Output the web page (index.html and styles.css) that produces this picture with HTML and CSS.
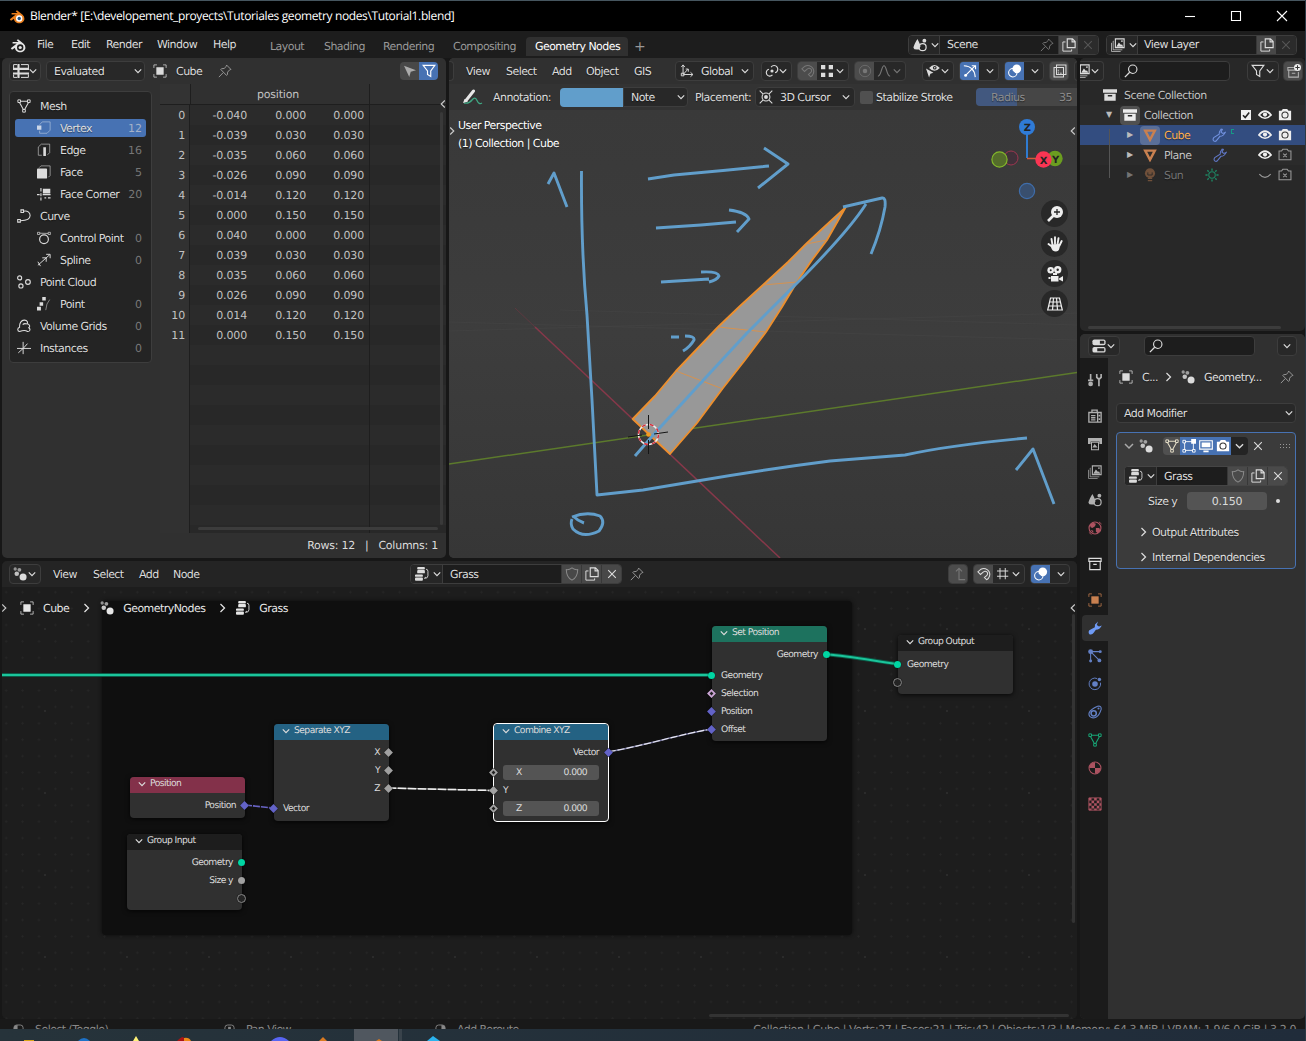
FILE: index.html
```html
<!DOCTYPE html>
<html lang="en">
<head>
<meta charset="utf-8">
<title>Blender</title>
<link rel="stylesheet" href="styles.css">
</head>
<body>
<svg class="defs" width="0" height="0">
<symbol id="chev" viewBox="0 0 8 8"><path d="M.8 2.4 4 5.6 7.2 2.4" fill="none" stroke="currentColor" stroke-width="1.2"/></symbol>
<symbol id="next" viewBox="0 0 8 8"><path d="M2.2.5 5.8 4 2.2 7.5" fill="none" stroke="currentColor" stroke-width="1.1"/></symbol>
<symbol id="prev" viewBox="0 0 8 8"><path d="M5.8.5 2.2 4 5.8 7.5" fill="none" stroke="currentColor" stroke-width="1.1"/></symbol>
<symbol id="close" viewBox="0 0 10 10"><path d="M1.2 1.2 8.8 8.8M8.8 1.2 1.2 8.8" fill="none" stroke="currentColor" stroke-width="1.1"/></symbol>
<symbol id="check" viewBox="0 0 10 10"><path d="M0 0h10v10H0z" fill="#eee"/><path d="M2 5.200 4.200 7.500 8.200 2.500" fill="none" stroke="#222" stroke-width="1.600"/></symbol>
<symbol id="blender" viewBox="0 0 16 16"><path d="M.8 11.2 6.8 6.5H2.6V5h6L6.7 3.3 8 2.2l5.6 4.5a5 5 0 0 1 1.8 4c0 2.600-2.400 4.500-5.200 4.500S5 13.200 5 10.700L2 12.700z" fill="currentColor"/><circle class="hole" cx="10.200" cy="10.500" r="3.200"/><circle cx="10.200" cy="10.500" r="1.600" fill="currentColor"/></symbol>
<symbol id="logo" viewBox="0 0 16 16"><path d="M.8 11.200 6.800 6.500H2.600V5h6L6.700 3.300 8 2.200l5.600 4.500a5 5 0 0 1 1.800 4c0 2.600-2.400 4.500-5.200 4.500S5 13.200 5 10.700L2 12.700z" fill="#ea7e1c"/><circle cx="10.200" cy="10.500" r="3.200" fill="#fff"/><circle cx="10.200" cy="10.500" r="1.700" fill="#265787"/></symbol>
<symbol id="sheet" viewBox="0 0 16 14"><path d="M5.500 0V14M0 4.800H16M0 9.500H16" stroke="currentColor" stroke-width="2.200" fill="none"/><path d="M.6 4V.6H4M8 .6h7.400V4M.6 10.500v2.900H4M8 13.400h7.400v-3" stroke="currentColor" stroke-width="1" fill="none"/></symbol>
<symbol id="object" viewBox="0 0 16 16"><path d="M4.500 1H1V4.500M11.500 1H15V4.500M4.500 15H1V11.500M11.500 15H15V11.500" fill="none" stroke="currentColor" stroke-width="1.100" opacity=".75"/><path d="M3.800 3.800h8.400v8.400H3.800z" fill="currentColor"/></symbol>
<symbol id="pin" viewBox="0 0 16 16"><path d="M9.800 1.200 14.800 6.200 13.300 6.700 11 9.300 10.700 12.200 9.700 13 3.200 6.300 4 5.400 7 5.100 9.400 2.800zM6 9.800 1 15" fill="none" stroke="currentColor" stroke-width="1.100"/></symbol>
<symbol id="cursor" viewBox="0 0 16 16"><path d="M0 1 16 7 9 9 7 16z" fill="currentColor"/></symbol>
<symbol id="filter" viewBox="0 0 16 16"><path d="M1.300 1.500H14.700L10 8V14.300L6.300 12V8z" fill="none" stroke="currentColor" stroke-width="1.300"/></symbol>
<symbol id="mesh" viewBox="0 0 16 16"><path d="M4 2.500H12M3 4.300 7.300 12M13 4.300 8.700 12" fill="none" stroke="currentColor" stroke-width="1.200"/><path d="M1 1h3v3H1zM12 1h3v3h-3zM6.500 12h3v3h-3z" fill="none" stroke="currentColor" stroke-width="1.100"/></symbol>
<symbol id="vert" viewBox="0 0 16 16"><path d="M3 4.200 6 1h9v9.500L11.500 14H3V11" fill="none" stroke="currentColor" opacity=".6"/><path d="M0 5h5v5H0z" fill="currentColor"/></symbol>
<symbol id="edge" viewBox="0 0 16 16"><path d="M5.500 14H1.500V4.500L5 1.300h9.500V11L12 13.500" fill="none" stroke="currentColor" opacity=".65"/><path d="M7.200 4.800h3v10h-3z" fill="currentColor"/></symbol>
<symbol id="face" viewBox="0 0 16 16"><path d="M2.500 3 4.500 1H15V12L13 14" fill="none" stroke="currentColor" opacity=".65"/><rect x="0" y="4" width="11.500" height="11.500" rx="1" fill="currentColor"/></symbol>
<symbol id="corner" viewBox="0 0 16 16"><path d="M4.500 1V5M4.500 12V15.500M0 8.700H3M4.500 7V10.500M6.500 8.700h9M8.500 12.500h2M12.500 12.500h3" stroke="currentColor" stroke-width="1.300"/><path d="M6.700 2h8.500v5.300H6.700z" fill="currentColor"/></symbol>
<symbol id="curve" viewBox="0 0 16 16"><path d="M7.500 2.500C12 1.500 15 4 15 7.500S11 13.300 4 13.500" fill="none" stroke="currentColor" stroke-width="1.200"/><path d="M4.500 1h3v3h-3zM.8 12h3v3h-3z" fill="none" stroke="currentColor" stroke-width="1.200"/></symbol>
<symbol id="cpoint" viewBox="0 0 16 16"><circle cx="8" cy="9.500" r="5" fill="none" stroke="currentColor" stroke-width="1.300"/><path d="M3 2.500 13 2.800" stroke="currentColor" stroke-width=".8"/><path d="M.6 1.500h2.500V4H.6zM12.800 1.500h2.500V4h-2.500z" fill="#242424" stroke="currentColor" stroke-width=".8"/></symbol>
<symbol id="spline" viewBox="0 0 16 16"><path d="M1 14 14.500 2M10.500 1.500H15V6M6 5.500h4.500V10M1 10l3 5" fill="none" stroke="currentColor" stroke-width="1.100"/></symbol>
<symbol id="cloud" viewBox="0 0 16 16"><g fill="none" stroke="currentColor" stroke-width="1.300"><circle cx="3" cy="3.300" r="2.300"/><circle cx="12.500" cy="8" r="2.700"/><circle cx="4.500" cy="12.500" r="2.400"/></g></symbol>
<symbol id="point" viewBox="0 0 16 16"><path d="M6 0h4v4H6zM3 6h4v4H3zM0 11h4.500v4.500H0z" fill="currentColor"/><path d="M14.500 3Q10.500 7 10 15" fill="none" stroke="currentColor" opacity=".6"/></symbol>
<symbol id="volume" viewBox="0 0 16 16"><path d="M3 14.300C.5 14-.2 10.500 3 9.300 2.500 5 5 1 8.500 1.300S12.500 4 11.500 5.500c3.500.5 3.500 3.500 2 4.500 2.500 2 1 4.500-1.500 4.300-2-1.500-5-1.500-9 0zM6.500 6.500q2-2 4.500-.8" fill="none" stroke="currentColor" stroke-width="1.200"/></symbol>
<symbol id="inst" viewBox="0 0 16 16"><path d="M7 1V15M0 8.500H16M1.500 13.500 7 8.500 12 3" fill="none" stroke="currentColor" stroke-width="1.100"/></symbol>
<symbol id="geo" viewBox="0 0 16 16"><g fill="currentColor"><circle cx="2.500" cy="2.300" r="1.900" opacity=".6"/><circle cx="7.300" cy="3.200" r="2.200" opacity=".65"/><circle cx="4.300" cy="7.800" r="2.600" opacity=".85"/><circle cx="11.500" cy="11.500" r="4"/></g></symbol>
<symbol id="tree" viewBox="0 0 16 16"><g fill="currentColor"><rect x="2.500" y="0" width="8.800" height="2.800" rx="1"/><rect x="2.500" y="3.500" width="8.800" height="3.700" rx="1"/><rect x="0" y="8.500" width="9" height="2.700" rx="1"/><rect x="0" y="12" width="9" height="3.700" rx="1"/></g><path d="M12.500 2.500Q14.800 2.500 14.800 5V10Q14.800 13 11 13M12.500 11.500 10.500 13" fill="none" stroke="currentColor"/></symbol>
<symbol id="axes" viewBox="0 0 16 16"><path d="M3.500 12V1.500M1.500 3.500 3.500 1 5.500 3.500M4 12H14.500M12 9.500 14.800 12 12 14.500M4 11.500 9 6M6.500 5.800h3v3M1.500 13.500h3v-3h-3z" fill="none" stroke="currentColor" stroke-width="1.100"/></symbol>
<symbol id="pivot" viewBox="0 0 16 16"><path d="M8.500 12.500A4 4 0 1 1 4.500 6M7 3.500A4.200 4.200 0 1 1 11.500 10" fill="none" stroke="currentColor" stroke-width="1.300"/><circle cx="8" cy="8" r="1.800" fill="currentColor"/></symbol>
<symbol id="magnet" viewBox="0 0 16 16"><path d="M1 5.500 4.500 2.500A6.400 6.400 0 1 1 11 14.500L8.500 12 11 9.800A2.800 2.800 0 1 0 7 6L4 8.500z" fill="none" stroke="currentColor" stroke-width="1.200"/></symbol>
<symbol id="snap" viewBox="0 0 14 14"><path d="M0 0h5v5H0zM9 0h5v5H9zM0 9h5v5H0zM9 9h5v5H9z" fill="currentColor"/></symbol>
<symbol id="prop" viewBox="0 0 16 16"><circle cx="8" cy="8" r="6.500" fill="none" stroke="currentColor" stroke-width=".8"/><circle cx="8" cy="8" r="2.600" fill="currentColor"/></symbol>
<symbol id="fall" viewBox="0 0 16 16"><path d="M1 14C5 14 5 2 8 2s3 12 7 12" fill="none" stroke="currentColor" stroke-width="1.300"/></symbol>
<symbol id="visib" viewBox="0 0 16 16"><path d="M0 5 8.500 10 5 11 3.500 15.500z" fill="currentColor"/><path d="M3.500 4.500Q9.500-2 15.800 4.500 9.500 11 3.500 4.500z" fill="currentColor"/><circle cx="10" cy="4.300" r="2.100" fill="#282828"/><circle cx="10" cy="4.300" r=".9" fill="currentColor"/></symbol>
<symbol id="gizmo" viewBox="0 0 16 16"><path d="M1 2Q13 2.500 14 15M3 13 13.500 2.500M10 2H14.300V6" fill="none" stroke="currentColor" stroke-width="1.300"/><circle cx="3" cy="13" r="1.700" fill="currentColor"/></symbol>
<symbol id="overlay" viewBox="0 0 16 16"><circle cx="5.500" cy="10" r="4.800" fill="none" stroke="currentColor" stroke-width="1.200"/><circle cx="10" cy="5.500" r="5" fill="currentColor"/><path d="M5.300 8A5 5 0 0 0 8 10.500" fill="none" stroke="#4772b3"/></symbol>
<symbol id="xray" viewBox="0 0 16 16"><path d="M4 1.200H14.800V12H4zM1.200 4H12V14.800H1.200z" fill="none" stroke="currentColor" stroke-width="1.200"/><path d="M6 6.500v4h4" fill="none" stroke="currentColor" stroke-dasharray="2 1"/></symbol>
<symbol id="cur3d" viewBox="0 0 16 16"><circle cx="8" cy="8" r="4.500" fill="none" stroke="currentColor" stroke-width="1.200"/><circle cx="8" cy="8" r="2.200" fill="currentColor"/><path d="M.8.8 4.500 4.500M15.200.8 11.500 4.500M.8 15.200 4.500 11.500M15.200 15.200 11.500 11.500" stroke="currentColor" stroke-width="1.200"/></symbol>
<symbol id="scene" viewBox="0 0 16 16"><path d="M5 1Q8.500 7 8.500 10q-1.500 1-1.500 3-6 1-6.500-2Q.8 8 5 1z" fill="currentColor"/><circle cx="13" cy="3" r="2.200" fill="currentColor"/><circle cx="11" cy="10.500" r="4" fill="none" stroke="currentColor" stroke-width="1.400"/></symbol>
<symbol id="layers" viewBox="0 0 16 16"><path d="M3 3.500H2.500V13.500H13M.6 5.500V15.400H11" fill="none" stroke="currentColor" opacity=".8"/><path d="M5 1h10v10H5z" fill="none" stroke="currentColor" stroke-width="1.300"/><path d="M6 10 9 5 11.500 8 12.500 7 14 10z" fill="currentColor"/><circle cx="12.500" cy="3.500" r="1" fill="currentColor"/></symbol>
<symbol id="copy" viewBox="0 0 16 16"><path d="M6 1H12L15 4V11H6zM11.500 1V4.500H15" fill="none" stroke="currentColor" stroke-width="1.300"/><path d="M4 4.500H1V15H11V13" fill="none" stroke="currentColor" stroke-width="1.100"/></symbol>
<symbol id="search" viewBox="0 0 16 16"><circle cx="10" cy="6" r="4.800" fill="none" stroke="currentColor" stroke-width="1.300"/><path d="M6.500 9.500 1 15" stroke="currentColor" stroke-width="1.500"/></symbol>
<symbol id="box" viewBox="0 0 16 16"><path d="M0 1.500h16v4H0zM1.500 6.500h13v8h-13z" fill="currentColor"/><path d="M5.500 8.800h5" stroke="#282828" stroke-width="1.600"/></symbol>
<symbol id="boxo" viewBox="0 0 16 16"><path d="M1 1.500h14v3.500H1zM2 5v9.500h12V5M6 8.500h4" fill="none" stroke="currentColor" stroke-width="1.300"/></symbol>
<symbol id="newcol" viewBox="0 0 16 16"><path d="M8 4H1v3h9M2 7v8h11V9M5.500 10.500h4" fill="none" stroke="currentColor" stroke-width="1.200" opacity=".7"/><circle cx="12" cy="4" r="4" fill="#eee"/><path d="M12 1.500v5M9.500 4h5" stroke="#333" stroke-width="1.200"/></symbol>
<symbol id="tri" viewBox="0 0 16 16"><path d="M2.500 3H13.500L8 13.500z" fill="none" stroke="currentColor" stroke-width="2.800"/></symbol>
<symbol id="wrench" viewBox="0 0 16 16"><path d="M10.500 1.200 8.500 4.500 8.200 7.200 2 11Q.3 13.500 2.300 15q2.200 1 3.500-1.500L9 9.500Q13 9.500 15.200 5L12.500 6.300 10.300 4.800 11.800 1.500z" fill="none" stroke="currentColor" stroke-width="1.200"/></symbol>
<symbol id="wrenchf" viewBox="0 0 16 16"><path d="M11.500 .5 8 4 7.800 7 1.500 10.500Q-.3 13.500 2 15.300q2.800 1 4.500-1.800L9 10Q13.500 9.800 15.800 5L12.500 6.300 10 4.500z" fill="currentColor"/></symbol>
<symbol id="bulb" viewBox="0 0 16 16"><circle cx="8" cy="6" r="5.800" fill="currentColor"/><path d="M5.500 12h5M5.500 14.500h5" stroke="currentColor" stroke-width="1.400"/><path d="M5.500 5v3h5V5" fill="none" stroke="#282828"/></symbol>
<symbol id="sun" viewBox="0 0 16 16"><circle cx="8" cy="8" r="3.700" fill="none" stroke="currentColor" stroke-width="1.200"/><path d="M8 .5V3M8 13v2.500M.5 8H3M13 8h2.500M2.700 2.700 4.300 4.300M11.700 11.700l1.600 1.600M13.300 2.700 11.700 4.300M4.300 11.700 2.700 13.300" stroke="currentColor" stroke-width="1.600"/></symbol>
<symbol id="eye" viewBox="0 0 16 16"><path d="M1 8Q8-.8 15 8 8 15.500 1 8z" fill="none" stroke="currentColor" stroke-width="1.900"/><circle cx="8" cy="7.500" r="2.400" fill="currentColor"/></symbol>
<symbol id="shut" viewBox="0 0 16 16"><path d="M1.500 7Q8 14.500 14.500 7" fill="none" stroke="currentColor" stroke-width="1.300"/></symbol>
<symbol id="cam" viewBox="0 0 16 16"><path d="M1 3H4L5.500 1h5L12 3h3V14H1z" fill="currentColor"/><circle class="lens" cx="8" cy="8" r="3.500" fill="none" stroke-width="1.200"/></symbol>
<symbol id="camo" viewBox="0 0 16 16"><path d="M1.200 3.500H4L5.500 1.500h5L12 3.500h2.800V13.500H1.200zM6 6.500l4 4M10 6.500l-4 4" fill="none" stroke="currentColor" stroke-width="1.200"/></symbol>
<symbol id="props" viewBox="0 0 16 16"><rect x=".5" y=".5" width="15" height="6.500" rx="2.200" fill="currentColor"/><rect x=".5" y="9" width="15" height="6.500" rx="2.200" fill="currentColor"/><path d="M9 2h5v3.500H9zM6 10.500h8V14H6z" fill="#282828"/></symbol>
<symbol id="tools" viewBox="0 0 16 16"><path d="M3 1v8M0 8.500h6M10 1v4l1.500 1.500h2L15 5V1M12.500 6v9" fill="none" stroke="currentColor" stroke-width="1.900"/><circle cx="3" cy="12.500" r="2.700" fill="currentColor"/></symbol>
<symbol id="render" viewBox="0 0 16 16"><path d="M1 4h14v11H1zM4.500 4V1.200h6V4M11 4v11M3.500 7.500h5M3.500 10h5M3.500 12.500h5" fill="none" stroke="currentColor" stroke-width="1.500"/><path d="M12 6.500h2v2h-2zM12 10.500h2v2h-2z" fill="currentColor"/></symbol>
<symbol id="output" viewBox="0 0 16 16"><path d="M0 1h16v7h-3V5H3v3H0z" fill="currentColor"/><path d="M4 6h8v8.500H4z" fill="none" stroke="currentColor" stroke-width="1.200"/><path d="M5 12 7.500 8 11 12z" fill="currentColor"/></symbol>
<symbol id="world" viewBox="0 0 16 16"><circle cx="8" cy="8" r="6.800" fill="none" stroke="currentColor" stroke-width="1.300"/><path d="M2 4 6 2 9 3 8 6 5 8 3 7zM9 8l4 0 1 3-3 3-2-2zM3 10l3 1 0 3z" fill="currentColor"/><path d="M12.500 1 15.500 3.500M1 13l3 2.500" stroke="currentColor"/></symbol>
<symbol id="parts" viewBox="0 0 16 16"><circle cx="3" cy="3" r="2.800" fill="currentColor"/><path d="M3 3H14M3 3V14M3 3 13 13" stroke="currentColor" stroke-width="1.200"/><circle cx="14" cy="3" r="1.700" fill="currentColor"/><circle cx="3" cy="13.800" r="1.700" fill="currentColor"/><circle cx="13" cy="13" r="2.200" fill="currentColor"/></symbol>
<symbol id="phys" viewBox="0 0 16 16"><path d="M10.500 1.800A6.600 6.600 0 1 0 14.300 6.500" fill="none" stroke="currentColor" stroke-width="1.100"/><circle cx="8" cy="8" r="3.200" fill="currentColor"/><circle cx="13" cy="2.800" r="2" fill="currentColor"/></symbol>
<symbol id="constr" viewBox="0 0 16 16"><path d="M1.500 8.500Q3 5 11 1.500 15.500.5 15 5 13 12 9 14 5 16 2 13 .5 11 1.500 8.500z" fill="none" stroke="currentColor" stroke-width="1.300"/><circle cx="6.500" cy="9.500" r="3" fill="none" stroke="currentColor" stroke-width="1.800"/><circle cx="12" cy="4" r="1.200" fill="currentColor"/></symbol>
<symbol id="mat" viewBox="0 0 16 16"><circle cx="8" cy="8" r="6.800" fill="none" stroke="currentColor" stroke-width="1.200"/><path d="M8 8V14.500A6.500 6.500 0 0 0 14.500 8zM8 8V1.500A6.500 6.500 0 0 0 1.500 8z" fill="currentColor"/></symbol>
<symbol id="tex" viewBox="0 0 16 16"><path d="M1 1h14v14H1z" fill="none" stroke="currentColor"/><path d="M1 1h3v3H1zM7 1h3v3H7zM4 4h3v3H4zM10 4h3v3h-3zM1 7h3v3H1zM7 7h3v3H7zM4 10h3v3H4zM10 10h3v3h-3zM13 1h2v3h-2zM13 7h2v3h-2zM1 13h3v2H1zM7 13h3v2H7zM13 13h2v2h-2z" fill="currentColor"/></symbol>
<symbol id="editm" viewBox="0 0 16 16"><path d="M3 3H13V13H3z" fill="none" stroke="currentColor"/><path d="M1 1.500h3v3H1zM1 12h3v3H1zM12 12h3v3h-3z" fill="#4772b3" stroke="currentColor"/><path d="M10.500 0H16v5.500h-5.500z" fill="currentColor"/></symbol>
<symbol id="screen" viewBox="0 0 16 16"><path d="M.8 2h14.400v9.500H.8z" fill="none" stroke="currentColor" stroke-width="1.300"/><path d="M3 4h10v5.500H3zM5 13h6v2H5z" fill="currentColor"/></symbol>
<symbol id="shield" viewBox="0 0 16 16"><path d="M8 1Q11 3.300 14.500 3 14.500 11.500 8 15 1.500 11.500 1.500 3 5 3.300 8 1z" fill="none" stroke="currentColor" stroke-width="1.200"/></symbol>
<symbol id="zoom" viewBox="0 0 16 16"><circle cx="10" cy="6" r="6" fill="currentColor"/><path d="M6.500 9.500 1 15" stroke="currentColor" stroke-width="2.600"/><path d="M10 3v6M7 6h6" stroke="#282828" stroke-width="1.300"/></symbol>
<symbol id="hand" viewBox="0 0 16 16"><path d="M5.500 9 4.500 3M8 8V1.300M10.500 8.500 11.500 2.200M12.500 9.500 14.700 5M5.500 11 1.500 8" stroke="currentColor" stroke-width="1.900" stroke-linecap="round"/><path d="M4.500 8.500 13 8Q13 15.500 9 15.500T4 11z" fill="currentColor"/></symbol>
<symbol id="movie" viewBox="0 0 16 16"><circle cx="3.700" cy="4.200" r="3.300" fill="currentColor"/><circle cx="10.700" cy="3.800" r="3.700" fill="currentColor"/><circle cx="3.700" cy="4.200" r="1" fill="#282828"/><circle cx="10.700" cy="3.800" r="1.200" fill="#282828"/><path d="M4 10H11.500V15.500H4zM12 12.500 16 10v5.500L12 13.500zM1.500 11h2v2h-2zM6 7h4v2H6z" fill="currentColor"/></symbol>
<symbol id="grid" viewBox="0 0 16 16"><path d="M3.500 2H12.500L15.300 14H.7zM2.700 6H13.300M1.700 10H14.300M6.500 2 5.500 14M9.500 2 10.500 14" fill="none" stroke="currentColor" stroke-width="1.200"/></symbol>
<symbol id="snapg" viewBox="0 0 16 16"><path d="M4 0V15M11 0V15M0 4H15M0 11H15" stroke="currentColor" stroke-width="1.300"/></symbol>
<symbol id="up" viewBox="0 0 16 16"><path d="M4.500 5 8 1.500 11.500 5M8 2V14.500H15" fill="none" stroke="currentColor" stroke-width="1.300"/></symbol>
<symbol id="mouse" viewBox="0 0 12 14"><path d="M1 14V4Q1 1 4 1H8Q11 1 11 4V14" fill="none" stroke="currentColor"/></symbol>
</svg>

<header class="titlebar"><svg class="i16"><use href="#logo"/></svg><span class="wintitle">Blender* [E:\developement_proyects\Tutoriales geometry nodes\Tutorial1.blend]</span>
<div class="winbtns"><svg viewBox="0 0 12 12"><path d="M1 6.500h10" /></svg><svg viewBox="0 0 12 12"><path d="M1.500 1.500h9v9h-9z"/></svg><svg viewBox="0 0 12 12"><path d="M1 1 11 11M11 1 1 11"/></svg></div></header>

<nav class="topbar">
 <svg class="i16 applogo"><use href="#blender"/></svg>
 <div class="menus"><span class="w-file">File</span><span class="w-edit">Edit</span><span class="w-render">Render</span><span class="w-window">Window</span><span>Help</span></div>
 <div class="tabs"><span class="w-layout">Layout</span><span class="w-shading">Shading</span><span class="w-rendering">Rendering</span><span class="w-comp">Compositing</span><span class="on">Geometry Nodes</span><span class="plus">+</span></div>
 <div class="idbox scenebox"><span class="seg pick"><svg class="i14"><use href="#scene"/></svg><svg class="c"><use href="#chev"/></svg></span><span class="seg name">Scene<svg class="i14 dim"><use href="#pin"/></svg></span><span class="seg btn"><svg class="i14"><use href="#copy"/></svg></span><span class="seg btn off"><svg class="i9"><use href="#close"/></svg></span></div>
 <div class="idbox layerbox"><span class="seg pick"><svg class="i14"><use href="#layers"/></svg><svg class="c"><use href="#chev"/></svg></span><span class="seg name">View Layer</span><span class="seg btn"><svg class="i14"><use href="#copy"/></svg></span><span class="seg btn off"><svg class="i9"><use href="#close"/></svg></span></div>
</nav>

<main class="workspace">
 <div class="leftcol">
  <div class="toprow">
   <section class="area spreadsheet">
    <div class="bar">
     <span class="drop w32"><svg class="i16"><use href="#sheet"/></svg><svg class="c"><use href="#chev"/></svg></span>
     <span class="drop evald"><b>Evaluated</b><svg class="c"><use href="#chev"/></svg></span>
     <svg class="i14 ml8"><use href="#object"/></svg><b class="cubename">Cube</b><svg class="i14 dim2"><use href="#pin"/></svg>
     <span class="pair"><i><svg class="i12"><use href="#cursor"/></svg></i><i class="blue"><svg class="i14"><use href="#filter"/></svg></i></span>
    </div>
    <div class="sheetbody">
     <div class="domains">
      <div><svg><use href="#mesh"/></svg><b>Mesh</b></div>
      <div class="sub picked"><svg><use href="#vert"/></svg><b>Vertex</b><em>12</em></div>
      <div class="sub"><svg><use href="#edge"/></svg><b>Edge</b><em>16</em></div>
      <div class="sub"><svg><use href="#face"/></svg><b>Face</b><em>5</em></div>
      <div class="sub"><svg><use href="#corner"/></svg><b>Face Corner</b><em>20</em></div>
      <div><svg><use href="#curve"/></svg><b>Curve</b></div>
      <div class="sub"><svg><use href="#cpoint"/></svg><b>Control Point</b><em>0</em></div>
      <div class="sub"><svg><use href="#spline"/></svg><b>Spline</b><em>0</em></div>
      <div><svg><use href="#cloud"/></svg><b>Point Cloud</b></div>
      <div class="sub"><svg><use href="#point"/></svg><b>Point</b><em>0</em></div>
      <div><svg><use href="#volume"/></svg><b>Volume Grids</b><em>0</em></div>
      <div><svg><use href="#inst"/></svg><b>Instances</b><em>0</em></div>
     </div>
     <div class="table">
      <div class="thead"><span></span><span>position</span><span></span></div>
      <div class="trow"><i>0</i><u>-0.040</u><u>0.000</u><u>0.000</u></div>
      <div class="trow"><i>1</i><u>-0.039</u><u>0.030</u><u>0.030</u></div>
      <div class="trow"><i>2</i><u>-0.035</u><u>0.060</u><u>0.060</u></div>
      <div class="trow"><i>3</i><u>-0.026</u><u>0.090</u><u>0.090</u></div>
      <div class="trow"><i>4</i><u>-0.014</u><u>0.120</u><u>0.120</u></div>
      <div class="trow"><i>5</i><u>0.000</u><u>0.150</u><u>0.150</u></div>
      <div class="trow"><i>6</i><u>0.040</u><u>0.000</u><u>0.000</u></div>
      <div class="trow"><i>7</i><u>0.039</u><u>0.030</u><u>0.030</u></div>
      <div class="trow"><i>8</i><u>0.035</u><u>0.060</u><u>0.060</u></div>
      <div class="trow"><i>9</i><u>0.026</u><u>0.090</u><u>0.090</u></div>
      <div class="trow"><i>10</i><u>0.014</u><u>0.120</u><u>0.120</u></div>
      <div class="trow"><i>11</i><u>0.000</u><u>0.150</u><u>0.150</u></div>
      <div class="filler"><i></i><u></u></div>
      <div class="hscroll"></div><div class="vscroll"></div>
     </div>
    </div>
    <div class="foot"><span>Rows: 12</span><span>|</span><span>Columns: 1</span></div>
    <svg class="side-tab sheet-tab"><use href="#prev"/></svg>
   </section>

   <section class="area viewport">
    <div class="bar vbar">
     <span class="sliver"></span>
     <b class="v-view">View</b><b class="v-select">Select</b><b class="v-add">Add</b><b class="v-object">Object</b><b class="v-gis">GIS</b>
     <span class="drop global"><svg class="i14"><use href="#axes"/></svg><b>Global</b><svg class="c"><use href="#chev"/></svg></span>
     <span class="drop ml7 w30"><svg class="i14"><use href="#pivot"/></svg><svg class="c"><use href="#chev"/></svg></span>
     <span class="drop split ml5 w51"><i class="grey fade"><svg class="i14"><use href="#magnet"/></svg></i><svg class="i12"><use href="#snap"/></svg><svg class="c"><use href="#chev"/></svg></span>
     <span class="drop split ml5 w51 fade"><i class="grey"><svg class="i14"><use href="#prop"/></svg></i><svg class="i14"><use href="#fall"/></svg><svg class="c"><use href="#chev"/></svg></span>
     <span class="drop ml16 w32"><svg class="i14"><use href="#visib"/></svg><svg class="c"><use href="#chev"/></svg></span>
     <span class="drop split ml5 w39"><i class="blue"><svg class="i14"><use href="#gizmo"/></svg></i><svg class="c"><use href="#chev"/></svg></span>
     <span class="drop split ml5 w39"><i class="blue"><svg class="i14"><use href="#overlay"/></svg></i><svg class="c"><use href="#chev"/></svg></span>
     <span class="drop split ml5 w20"><i class="grey"><svg class="i14"><use href="#xray"/></svg></i></span>
     <span class="sliver end"></span>
    </div>
    <div class="bar vtool">
     <svg class="pen" viewBox="0 0 20 16"><path d="M1 14Q6 15 9 11T14 11.500 19 14" fill="none" stroke="#3fa783" stroke-width="1.300"/><path d="M3 11.500 10.500 2" stroke="#e6e6e6" stroke-width="3" stroke-linecap="round"/><path d="M0 14 1.500 10 5 12.500z" fill="#e6e6e6"/></svg>
     <b class="annlabel">Annotation:</b><span class="swatch"></span><span class="drop note"><b>Note</b><svg class="c"><use href="#chev"/></svg></span>
     <b class="placelabel">Placement:</b>
     <span class="drop cursorsel"><svg class="i14"><use href="#cur3d"/></svg><b>3D Cursor</b><svg class="c"><use href="#chev"/></svg></span>
     <span class="check"></span><b class="stab">Stabilize Stroke</b>
     <span class="radius"><b>Radius</b><b>35</b></span>
    </div>
    <div class="view3d">
     <svg class="scene3d" viewBox="449 110 628 448">
      <g fill="none" stroke="#444" stroke-width=".7"><path d="M449 331 1077 313M449 322 1077 340M560 310 1077 325"/></g>
      <path d="M449 464 1077 372.500" stroke="#5c7a2c" stroke-width="1.500"/>
      <path d="M535 327 780 558" stroke="#87384a" stroke-width="1.500"/><path d="M515 308 535 327" stroke="#5c3940"/>
      <path d="M845.500 207.500 822 229 806 244 788 262 763 285 740 306 718 327 697 349 676 371 655 396 632.700 419 670 454 697 423 723 388 745 360 766 332 782 307 797 282 812 260 827 240z" fill="#989898" stroke="#ec8f2e" stroke-width="1.900" stroke-linejoin="round"/>
      <path d="M676 371 723 389M718 327 766 332M763 285 797 282M806 244 827 240" stroke="#d59250" stroke-width="1" fill="none"/>
      <g fill="none" stroke="#619ecb" stroke-width="2.900" stroke-linecap="butt" stroke-linejoin="round">
       <path d="M581.500 171Q581 250 587 315L592 400 597 495 643 490 697 481Q760 470 830 461L905 455Q950 445 1027 438"/>
       <path d="M548 184 554 173 567 207M1016 470 1033 449 1054 504"/>
       <path d="M573 516Q578 521 584 523M572 517Q587 511 600 516 606 522 599 531 583 539 573 529 570 524 572 519"/>
       <path d="M648 179 674 175Q720 171 769 166M764 148 788 164 758 188M656 228 701 225 736 222M729 210Q746 212 749 219L737 232M661 282 709 279M701 272Q718 271 719 276 717 280 709 282M671 337H679M685 336Q695 336 694 340 690 347 683 351"/>
       <path d="M635 456 655 433 697 387 747 333 806 274Q850 229 866 204M843 207 882 198Q886 197 885 207 881 230 871 254"/>
      </g>
      <circle cx="648.500" cy="434.500" r="10" fill="none" stroke="#eee" stroke-width="1.500"/><circle cx="648.500" cy="434.500" r="10" fill="none" stroke="#d3303e" stroke-width="1.500" stroke-dasharray="4 4"/>
      <path d="M648.500 415v14M648.500 440v14M628 437l14-2M654 434l14-2" stroke="#151515" stroke-width="1"/><circle cx="648.500" cy="434.500" r="2.300" fill="#f39a22"/>
      <path d="M1027 158V127" stroke="#2f7bd1" stroke-width="2"/><path d="M1027 158.500H1043" stroke="#d05b3b" stroke-width="1.500"/>
      <circle cx="1011" cy="158" r="7" fill="#40313a" stroke="#9d3650"/><circle cx="999.500" cy="159.500" r="7.600" fill="#546c2b" stroke="#83b82a" stroke-width="1.200"/>
      <circle cx="1027" cy="127" r="8" fill="#2f7bd6"/><circle cx="1055" cy="158.500" r="7.700" fill="#6b9d20"/><circle cx="1043.500" cy="159.500" r="8.200" fill="#fa3553"/><circle cx="1027" cy="191" r="7.600" fill="#394f6e" stroke="#3f6daa" stroke-width="1.200"/>
      <g class="axis"><text x="1027.500" y="131">Z</text><text x="1043.500" y="163.500">X</text><text x="1055.500" y="162.500">Y</text></g>
     </svg>
     <div class="viewinfo"><b>User Perspective</b><b>(1) Collection | Cube</b></div>
     <div class="navbtns"><span><svg><use href="#zoom"/></svg></span><span><svg><use href="#hand"/></svg></span><span><svg><use href="#movie"/></svg></span><span><svg><use href="#grid"/></svg></span></div>
     <svg class="side-tab vl"><use href="#next"/></svg><svg class="side-tab vr"><use href="#prev"/></svg>
    </div>
   </section>
  </div>

  <section class="area nodeed">
   <div class="bar nbar">
    <span class="drop w32"><svg class="i14"><use href="#geo"/></svg><svg class="c"><use href="#chev"/></svg></span>
    <b class="n-view">View</b><b class="n-select">Select</b><b class="n-add">Add</b><b class="n-node">Node</b>
    <div class="idbox grassbox"><span class="seg pick"><svg class="i14"><use href="#tree"/></svg><svg class="c"><use href="#chev"/></svg></span><span class="seg name"><b>Grass</b></span><span class="seg btn mute"><svg class="i14"><use href="#shield"/></svg></span><span class="seg btn"><svg class="i14"><use href="#copy"/></svg></span><span class="seg btn"><svg class="i9"><use href="#close"/></svg></span></div>
    <svg class="i14 dim2 ml8"><use href="#pin"/></svg>
    <span class="drop split w20 parent"><i class="grey fade"><svg class="i14"><use href="#up"/></svg></i></span>
    <span class="drop split w51 ml5"><i class="grey"><svg class="i14"><use href="#magnet"/></svg></i><svg class="i12"><use href="#snapg"/></svg><svg class="c"><use href="#chev"/></svg></span>
    <span class="drop split w39 ml5"><i class="blue"><svg class="i14"><use href="#overlay"/></svg></i><svg class="c"><use href="#chev"/></svg></span>
   </div>
   <div class="canvas">
    <div class="frame"></div>
    <svg class="links" viewBox="2 587 1075 432">
     <g fill="none"><path d="M0 675H712M827 654.500C850 656 875 661 898 664" stroke="#0b5a47" stroke-width="4"/><path d="M0 675H712M827 654.500C850 656 875 661 898 664" stroke="#1bc59b" stroke-width="2"/>
     <path d="M245 805 273 808" stroke="#6863c4" stroke-width="1.600" stroke-dasharray="7 1"/><path d="M388 788 493 790.500" stroke="#888" stroke-width="1.600"/><path d="M388 788 493 790.500" stroke="#eee" stroke-width="1.500" stroke-dasharray="8 2"/><path d="M609 751.500C640 747 680 734 712 729" stroke="#77779f" stroke-width="1.600"/><path d="M609 751.500C640 747 680 734 712 729" stroke="#e8e8f2" stroke-width="1.100" stroke-dasharray="7 2"/></g>
    </svg>
    <div class="node position"><h4 class="red"><svg><use href="#chev"/></svg>Position</h4><p class="out">Position<s class="dia vec"></s></p></div>
    <div class="node separate"><h4 class="teal"><svg><use href="#chev"/></svg>Separate XYZ</h4><p class="out">X<s class="dia"></s></p><p class="out">Y<s class="dia"></s></p><p class="out">Z<s class="dia"></s></p><p class="in">Vector<s class="dia vec"></s></p></div>
    <div class="node combine"><h4 class="teal"><svg><use href="#chev"/></svg>Combine XYZ</h4><p class="out">Vector<s class="dia vec"></s></p><p class="in field"><label><span>X</span><span>0.000</span></label><s class="dia hollow"></s></p><p class="in">Y<s class="dia"></s></p><p class="in field"><label><span>Z</span><span>0.000</span></label><s class="dia hollow"></s></p></div>
    <div class="node ginput"><h4 class="black"><svg><use href="#chev"/></svg>Group Input</h4><p class="out">Geometry<s class="dot geo"></s></p><p class="out">Size y<s class="dot"></s></p><p class="out"><s class="dot ring"></s></p></div>
    <div class="node setpos"><h4 class="green"><svg><use href="#chev"/></svg>Set Position</h4><p class="out">Geometry<s class="dot geo"></s></p><p class="in">Geometry<s class="dot geo"></s></p><p class="in">Selection<s class="dia pink hollow"></s></p><p class="in">Position<s class="dia vec"></s></p><p class="in">Offset<s class="dia vec"></s></p></div>
    <div class="node goutput"><h4 class="black"><svg><use href="#chev"/></svg>Group Output</h4><p class="in">Geometry<s class="dot geo"></s></p><p class="in"><s class="dot ring"></s></p></div>
    <div class="path"><svg class="i14"><use href="#object"/></svg><b>Cube</b><svg class="c9"><use href="#next"/></svg><svg class="i14"><use href="#geo"/></svg><b>GeometryNodes</b><svg class="c9"><use href="#next"/></svg><svg class="i14"><use href="#tree"/></svg><b>Grass</b></div>
    <svg class="side-tab nl"><use href="#next"/></svg><svg class="side-tab nr"><use href="#prev"/></svg>
    <div class="nhs"></div><div class="nvs"></div>
   </div>
  </section>
 </div>

 <div class="rightcol">
  <section class="area outliner">
   <div class="bar obar"><span class="drop cut"><svg class="i14"><use href="#layers"/></svg><svg class="c"><use href="#chev"/></svg></span><span class="searchbox osearch"><svg class="i14"><use href="#search"/></svg></span><span class="drop w32 ofilter"><svg class="i14"><use href="#filter"/></svg><svg class="c"><use href="#chev"/></svg></span><span class="drop split w20 ml5"><i class="grey"><svg class="i14"><use href="#newcol"/></svg></i></span></div>
   <div class="orow r0"><svg class="i14"><use href="#box"/></svg><b>Scene Collection</b></div>
   <div class="orow r1"><em>▼</em><span class="halo"><svg class="i14"><use href="#box"/></svg></span><b>Collection</b><div class="flags"><svg class="cb"><use href="#check"/></svg><svg><use href="#eye"/></svg><svg><use href="#cam"/></svg></div></div>
   <div class="orow r2 sel"><em>▶</em><span class="halo"><svg class="i14 orange"><use href="#tri"/></svg></span><b>Cube</b><svg class="i14 wr"><use href="#wrench"/></svg><span class="tick"></span><div class="flags"><svg><use href="#eye"/></svg><svg><use href="#cam"/></svg></div></div>
   <div class="orow r2"><em>▶</em><span class="halo no"><svg class="i14 orange"><use href="#tri"/></svg></span><b>Plane</b><svg class="i14 wr wr2"><use href="#wrench"/></svg><div class="flags"><svg><use href="#eye"/></svg><svg class="dim2"><use href="#camo"/></svg></div></div>
   <div class="orow r2 hid"><em>▶</em><span class="halo no"><svg class="i14 brown"><use href="#bulb"/></svg></span><b>Sun</b><svg class="i14 sunny"><use href="#sun"/></svg><div class="flags"><svg><use href="#shut"/></svg><svg><use href="#camo"/></svg></div></div>
   <div class="guide"></div><div class="ohs"></div>
  </section>
  <section class="area props">
   <div class="bar pbar"><span class="drop w32"><svg class="i14"><use href="#props"/></svg><svg class="c"><use href="#chev"/></svg></span><span class="searchbox psearch"><svg class="i14"><use href="#search"/></svg></span><span class="drop w20 pdrop"><svg class="c"><use href="#chev"/></svg></span></div>
   <div class="pbody">
    <div class="ptabs">
     <span class="gap"><svg><use href="#tools"/></svg></span>
     <span><svg><use href="#render"/></svg></span><span><svg><use href="#output"/></svg></span><span><svg><use href="#layers"/></svg></span><span><svg><use href="#scene"/></svg></span><span class="gap rose"><svg><use href="#world"/></svg></span>
     <span class="gap white"><svg><use href="#boxo"/></svg></span>
     <span class="orange"><svg><use href="#object"/></svg></span><span class="on"><svg><use href="#wrenchf"/></svg></span><span class="bl"><svg><use href="#parts"/></svg></span><span class="bl"><svg><use href="#phys"/></svg></span><span class="bl"><svg><use href="#constr"/></svg></span><span class="gr"><svg><use href="#mesh"/></svg></span><span class="gap rose"><svg><use href="#mat"/></svg></span>
     <span class="rose"><svg><use href="#tex"/></svg></span>
    </div>
    <div class="pmain">
     <div class="pcrumb"><svg class="i14"><use href="#object"/></svg><b>C...</b><svg class="c9"><use href="#next"/></svg><svg class="i14"><use href="#geo"/></svg><b class="gm">Geometry...</b><svg class="i14 dim2 pp"><use href="#pin"/></svg></div>
     <div class="addmod"><b>Add Modifier</b><svg class="c"><use href="#chev"/></svg></div>
     <div class="mod">
      <div class="mhead"><svg class="c10"><use href="#chev"/></svg><svg class="i14"><use href="#geo"/></svg><span class="modes"><i><svg class="i14 cream"><use href="#mesh"/></svg></i><i class="blue"><svg class="i14"><use href="#editm"/></svg></i><i class="blue"><svg class="i14"><use href="#screen"/></svg></i><i class="blue bluecam"><svg class="i14"><use href="#cam"/></svg></i><i class="dk"><svg class="c9"><use href="#chev"/></svg></i></span><svg class="i9"><use href="#close"/></svg><span class="grip"></span></div>
      <div class="idbox modbox"><span class="seg pick"><svg class="i14"><use href="#tree"/></svg><svg class="c"><use href="#chev"/></svg></span><span class="seg name"><b>Grass</b></span><span class="seg btn mute"><svg class="i14"><use href="#shield"/></svg></span><span class="seg btn"><svg class="i14"><use href="#copy"/></svg></span><span class="seg btn"><svg class="i9"><use href="#close"/></svg></span></div>
      <div class="size"><b>Size y</b><span>0.150</span><i></i></div>
      <div class="fold"><svg class="c9"><use href="#next"/></svg><b>Output Attributes</b></div>
      <div class="fold"><svg class="c9"><use href="#next"/></svg><b>Internal Dependencies</b></div>
     </div>
    </div>
   </div>
  </section>
 </div>
</main>
<footer class="status"><span class="s1"><svg viewBox="0 0 12 14"><use href="#mouse"/><path d="M1 8V4Q1 1 5 1V8z" fill="currentColor"/></svg>Select (Toggle)</span><span class="s2"><svg viewBox="0 0 12 14"><use href="#mouse"/><path d="M4.500 3h3v6h-3z" fill="currentColor"/></svg>Pan View</span><span class="s3"><svg viewBox="0 0 12 14"><use href="#mouse"/><path d="M7 1Q11 1 11 4V8H7z" fill="currentColor"/></svg>Add Reroute</span><span class="s4">Collection | Cube | Verts:27 | Faces:21 | Tris:42 | Objects:1/3 | Memory: 64.3 MiB | VRAM: 1.9/6.0 GiB | 3.2.0</span></footer>
<div class="taskbar"><svg viewBox="0 0 1306 12"><path d="M354 0h44v12h-44z" fill="#50575f"/><path d="M399 0h3v12h-3z" fill="#39434b"/><path d="M24 11h10v1H24z" fill="#dba516"/><path d="M78 12Q84 6 90 12z" fill="#1d72c8"/><path d="M133 12 136 7 139 12z" fill="#fff176"/><path d="M177 12Q183 6 184 9V12z" fill="#a91515"/><path d="M184 9Q189 8 191 12H184z" fill="#f08a17"/><path d="M271 12Q280 4 289 12z" fill="#5865f2"/><path d="M319 12 323 8 327 12zM376 12 379 10 382 12z" fill="#d97a20"/><path d="M427 12 433 7 440 12z" fill="#2bb3ee"/></svg></div>
</body>
</html>
```
FILE: styles.css
```css
*{box-sizing:border-box}
body{margin:0;width:1306px;height:1041px;overflow:hidden;background:#171717;color:#dcdcdc;font:11px/14px "DejaVu Sans",sans-serif;letter-spacing:-.55px;text-rendering:geometricPrecision;display:flex;flex-direction:column;border-right:1px solid #2b3945}
b{font-weight:400;white-space:nowrap;text-shadow:0 1px 1px rgba(0,0,0,.45);position:relative;top:1px;flex:none}
i,em{font-style:normal}
u,s{text-decoration:none}
svg{flex:none;display:block}
.defs{position:absolute}
.i16{width:16px;height:16px}.i14{width:14px;height:14px}.i12{width:12px;height:12px}.i9{width:10px;height:10px}
.c{width:8px;height:8px}.c9{width:9px;height:10px}.c10{width:10px;height:10px}
.dim{color:#777}.dim2{color:#999}
.hole{fill:#1d1d1d}.lens{stroke:#333}
.ml5{margin-left:5px}.ml7{margin-left:7px}.ml8{margin-left:8px}.ml16{margin-left:16px}
.titlebar{height:31px;background:#000;border-top:1px solid #46565f;display:flex;align-items:center;padding-left:9px;flex:none}
.wintitle{font:12px/16px "Open Sans","Noto Sans",sans-serif;letter-spacing:-.37px;color:#fff;margin-left:5px;white-space:pre}
.winbtns{margin-left:auto;display:flex;gap:34px;padding-right:17px}
.winbtns svg{width:12px;height:12px;fill:none;stroke:#fff;stroke-width:1.1}
.topbar{height:27px;background:#1d1d1d;display:flex;align-items:center;padding-left:10px;flex:none;position:relative}
.applogo{color:#e6e6e6}
.menus{display:flex;margin-left:11px}
.w-file{width:34px}.w-edit{width:35px}.w-render{width:51px}.w-window{width:56px}
.menus span:last-child{width:34px}
.tabs{display:flex;margin-left:23px;color:#989898;align-self:flex-end;height:21px;line-height:20px}
.w-layout{width:54px}.w-shading{width:59px}.w-rendering{width:70px}.w-comp{width:73px}
.tabs .on{background:#303030;color:#fff;width:102px;height:19px;padding-left:9px;border-radius:4px 4px 0 0;white-space:nowrap}
.plus{font-size:14px;padding-left:6px;width:20px}
.idbox{display:flex;height:20px;border:1px solid #3d3d3d;border-radius:4px;overflow:hidden;background:#1d1d1d;flex:none}
.seg{display:flex;align-items:center;white-space:nowrap}
.pick{width:31px;padding-left:4px;gap:4px;border-right:1px solid #3d3d3d;background:#262626;flex:none}
.name{flex:1;padding-left:7px;justify-content:space-between;padding-right:4px}
.btn{width:20px;background:#484848;justify-content:center;border-left:1px solid #383838}
.btn.off{background:#2b2b2b;color:#555;border:0}.btn.mute{color:#888}
.scenebox{width:191px;margin-left:auto}
.layerbox{width:191px;margin:0 8px 0 7px}
.layerbox .name{padding-left:6px}
.workspace{flex:none;height:961px;display:flex;gap:3px;padding-left:2px}
.leftcol{width:1075px;display:flex;flex-direction:column;gap:3px;flex:none}
.toprow{display:flex;gap:3px;height:500px}
.area{position:relative;border-radius:5px;overflow:hidden;background:#303030}
.spreadsheet{width:444px;display:flex;flex-direction:column;flex:none}
.bar{height:26px;display:flex;align-items:center;flex:none;padding-left:7px}
.drop{height:20px;border:1px solid #3d3d3d;border-radius:4px;background:#282828;display:flex;align-items:center;padding:0 4px 0 3px;justify-content:space-between;flex:none;overflow:hidden}
.w20{width:20px}.w30{width:31px}.w32{width:32px}.w39{width:40px}.w51{width:52px}
.w32 .i16{width:16px;height:14px}
.evald{width:99px;margin-left:5px;padding-left:7px;padding-right:2px}
.cubename{margin:0 16px 0 9px}
.split{padding-left:0}
.split>i,.pair i{width:19px;height:20px;display:flex;align-items:center;justify-content:center;flex:none}
.grey{background:#4c4c4c}.blue{background:#4772b3;color:#fff}
.fade{color:#777}
.w20.split{padding-right:0}
.pair{display:flex;margin-left:auto;margin-right:8px;border-radius:4px;overflow:hidden}
.pair i{height:18px;background:#484848;color:#aaa}.pair i.blue{background:#4772b3;color:#fff}
.sheetbody{display:flex;height:449px}
.domains{width:143px;height:272px;margin:7px 0 0 7px;background:#242424;border:1px solid #3d3d3d;border-radius:4px;padding:3px 5px}
.domains div{height:22px;display:flex;align-items:center;padding:0 4px 0 2px;gap:9px}
.domains div svg{width:14px;height:14px}
.domains .sub{padding-left:22px}
.domains em{margin-left:auto;color:#777;letter-spacing:0;position:relative;top:1px}
.domains .picked{background:#4772b3;height:18px;margin:2px 0}
.domains .picked{border-radius:3px}
.domains .picked em{color:#a5b2c9}
.domains .picked svg{color:#cbd6e8}
.table{margin-left:8px;width:286px;background:#282828;position:relative;color:#c2c2c2}
.thead{height:21px;display:flex;background:#303030;border-bottom:1px solid #1e1e1e;line-height:21px;text-align:center;letter-spacing:-.2px}
.thead span:nth-child(1){width:30px;background:#333}
.thead span:nth-child(2){width:180px;border:solid #1e1e1e;border-width:0 1px;padding-right:4px}
.trow{height:20px;display:flex;line-height:22px;letter-spacing:-.15px}
.trow:nth-child(even){background:#2b2b2b}
.trow i{width:30px;background:#313131;text-align:right;padding-right:4px;border-right:1px solid #1e1e1e}
.trow u{width:59px;text-align:right}.trow u:nth-child(2){width:57px}
.trow u:last-child{width:64px;padding-right:5px;border-right:1px solid #1e1e1e}
.filler{height:188px;display:flex;background:repeating-linear-gradient(#2b2b2b 0 20px,#282828 20px 40px)}
.filler i{width:30px;background:#313131;border-right:1px solid #1e1e1e}.filler u{width:180px;border-right:1px solid #1e1e1e}
.hscroll{position:absolute;left:38px;bottom:3px;width:240px;height:3px;background:#3c3c3c;border-radius:2px}
.vscroll{position:absolute;right:3px;top:28px;width:3px;height:413px;background:#393939;border-radius:2px}
.foot{display:flex;justify-content:flex-end;gap:10px;padding:6px 8px 0 0;letter-spacing:-.25px}
.side-tab{position:absolute;width:8px;height:10px;color:#ccc}
.sheet-tab{right:-1px;top:41px}
.viewport{width:628px;background:#393939;display:flex;flex-direction:column;flex:none}
.vbar{padding-left:0;background:#303030}
.sliver{width:5px;height:20px;border:1px solid #3d3d3d;border-left:0;border-radius:0 4px 4px 0;background:#282828;flex:none}
.end{border-radius:4px 0 0 4px;border-left:1px solid #3d3d3d;border-right:0;margin-left:5px}
.v-view{margin-left:12px;width:40px}.v-select{width:46px}.v-add{width:34px}.v-object{width:48px}.v-gis{width:41px}
.global{width:79px;padding-left:4px;gap:7px}.global .c{margin-left:auto}
.vtool{padding-left:14px;background:#333}
.pen{width:20px;height:16px}
.annlabel{margin-left:10px;width:67px}
.swatch{width:63px;height:19px;background:#619ecb;border-radius:4px 0 0 4px;flex:none}
.note{width:65px;border-radius:0 4px 4px 0;padding-left:7px;padding-right:2px}
.placelabel{margin-left:7px;width:60px}
.cursorsel{width:100px;gap:7px}.cursorsel .c{margin-left:auto}
.check{width:13px;height:13px;border-radius:2px;background:#505050;margin:0 3px 0 5px;flex:none}
.stab{width:100px}
.radius{flex:1;height:18px;display:flex;justify-content:space-between;align-items:center;border-radius:4px 0 0 4px;background:linear-gradient(90deg,#42587f 41px,#464646 41px);color:#8c8c8c;padding:0 5px 0 15px}
.view3d{position:relative;height:448px;background:linear-gradient(#393939,#3d3d3d 50%,#363636)}
.scene3d{width:628px;height:448px}
.axis{font:bold 10px "DejaVu Sans",sans-serif;text-anchor:middle;fill:#222;letter-spacing:0}
.viewinfo{position:absolute;left:9px;top:8px;display:flex;flex-direction:column;gap:4px;color:#fff}
.navbtns{position:absolute;left:592px;top:90px;display:flex;flex-direction:column;gap:3px}
.navbtns span{width:27px;height:27px;border-radius:50%;background:#282828;display:flex;align-items:center;justify-content:center;color:#eee}
.navbtns svg{width:16px;height:16px}
.vl{left:-1px;top:16px}.vr{right:0;top:16px}
.nodeed{height:458px;background:#1d1d1d}
.nbar{background:#242424}
.n-view{margin-left:12px;width:40px}.n-select{width:46px}.n-add{width:34px}.n-node{width:237px}
.grassbox{width:212px}
.grassbox .pick{width:32px}
.parent{margin-left:304px}
.canvas{position:relative;height:432px;background:radial-gradient(circle,#2b2b2b .8px,transparent 1.3px) 2px 1px/82px 82px,radial-gradient(circle,#262626 .8px,transparent 1.4px) -4px -3px/16.4px 16.4px #1d1d1d}
.frame{position:absolute;left:100px;top:14px;width:750px;height:334px;background:#0f0f0f;border-radius:4px;box-shadow:0 0 4px #0c0c0c}
.links{position:absolute;left:0;top:0;width:1075px;height:432px}
.node{position:absolute;width:115px;background:#303030;border-radius:4px;box-shadow:0 1px 5px rgba(0,0,0,.8);font-size:9.2px;letter-spacing:-.56px;line-height:20px}
.node h4{margin:0;height:16px;line-height:14px;font-weight:400;display:flex;align-items:center;gap:4px;padding:0 0 2px 8px;border-radius:4px 4px 0 0}
.node h4 svg{width:8px;height:8px}
.node p{margin:0;height:18px;position:relative;padding:0 9px}
.out{text-align:right}
.node s{position:absolute;width:7px;height:7px;background:#a1a1a1;top:6px;left:-4px;box-shadow:0 0 1px #000}
.node .out s{left:auto;right:-3px}
.dia{transform:rotate(45deg) scale(.9)}.dot{border-radius:50%}
.node .vec{background:#6363c7}.node .geo{background:#00d6a3}
.node .ring{background:#242424;border:1px solid #8a8a8a;width:9px;height:9px;top:5px;margin:0 -1px}
.node .hollow{background:#222;border:2px solid #a1a1a1}.node .pink{border-color:#cca6d6}
.red{background:#83314a}.teal{background:#246283}.black{background:#1d1d1d}.green{background:#1d725e}
.field label{display:flex;justify-content:space-between;background:#545454;border-radius:3px;height:15px;line-height:15px;padding:0 12px 0 13px;position:relative;top:2px}
.position{left:128px;top:190px;height:41px}.position p{top:3px}
.separate{left:272px;top:137px;height:97px}.separate p{top:3px}.separate p:last-child{top:5px}
.combine{left:491px;top:136px;height:99px;width:116px;border:1px solid #fff}.combine p{top:3px}.combine p:nth-child(n+3){top:5px}
.combine .out s{right:-4px}
.ginput{left:125px;top:247px;height:76px}.ginput p{top:3px}
.setpos{left:710px;top:39px;height:115px}.setpos p{top:3px}.setpos p:nth-child(n+3){top:6px}
.goutput{left:896px;top:48px;height:59px}.goutput p{top:4px}
.path{position:absolute;left:18px;top:14px;display:flex;align-items:center;color:#e6e6e6}
.path b{margin-left:9px;margin-right:13px}.path .c9{margin-right:9px}
.nl{left:-2px;top:16px}.nr{right:0;top:16px}
.nhs{position:absolute;left:707px;bottom:2px;width:360px;height:3px;background:#333;border-radius:2px}
.nvs{position:absolute;right:2px;top:27px;width:3px;height:309px;background:#333;border-radius:2px}
.rightcol{width:225px;display:flex;flex-direction:column;gap:3px}
.outliner{height:273px;background:#282828}
.pbar{background:#303030}
.obar{padding:0;background:#282828}
.cut{width:24px;border-left:0;border-radius:0 4px 4px 0;padding-left:0}
.cut .i14{margin-left:-4px}
.searchbox{height:20px;border:1px solid #3d3d3d;border-radius:4px;background:#1d1d1d;display:flex;align-items:center;padding-left:4px}
.osearch{width:111px;margin-left:15px}.ofilter{margin-left:17px}
.outliner .ml5{margin-left:4px}
.orow{height:20px;display:flex;align-items:center;color:#c3c3c3;top:1px;position:relative}
.orow b{margin-left:4px;top:0}
.r0{padding-left:23px}.r0 b{margin-left:7px}.r0 svg{color:#ddd}
.orow em{width:11px;font-size:8px;letter-spacing:0;color:#bbb}
.r1{padding-left:26px}.r1 .halo{margin-left:3px}
.r2{padding-left:47px}.r2 .halo{margin-left:2px}
.orow:nth-child(odd){background:#2b2b2b}
.halo{width:20px;height:19px;border-radius:4px;background:#505050;display:flex;align-items:center;justify-content:center;color:#eee}
.halo.no{background:none}
.orow.r2.sel{background:#334d80}.sel .halo{background:#5a6f98}.sel b{color:#ffaf4d}
.orow b{transform:translateY(1px)}
.orange{color:#c88050}.brown{color:#70503a}
.wr{color:#6078c8;margin-left:23px}.wr2{margin-left:22px}
.sel .wr{color:#7292e0;margin-left:22px}
.tick{width:3px;height:5px;border:1px solid #159b85;border-right:0;margin:-8px 0 0 5px}
.hid b,.hid em{color:#737373}.hid .flags{color:#999}.sunny{color:#1e8663;margin-left:22px}
.flags{margin-left:auto;display:flex;gap:6px;padding-right:13px;color:#eee;align-items:center}
.flags svg{width:14px;height:14px}
.flags .cb{width:10px;height:10px;margin-right:1px}
.guide{position:absolute;left:29px;top:71px;width:1px;height:49px;background:#555}
.ohs{position:absolute;left:8px;bottom:2px;width:193px;height:3px;background:#3c3c3c;border-radius:2px}
.props{height:685px}
.pbar{height:24px;padding-left:8px}
.psearch{width:111px;margin-left:24px}.pdrop{margin-left:22px;padding:0 5px}
.pbody{display:flex;height:661px}
.ptabs{width:28px;background:#1b1b1b;padding-top:9px;color:#b0b0b0}
.ptabs span{display:flex;height:26px;width:26px;margin:0 0 2px 2px;align-items:center;justify-content:center;border-radius:4px 0 0 4px}
.ptabs .gap{margin-bottom:10px}
.ptabs svg{width:14px;height:14px}
.ptabs .on{background:#303030;color:#6f9bf5}
.ptabs .orange{color:#c88050}.ptabs .bl{color:#6380c5}.ptabs .gr{color:#18a878}.ptabs .rose{color:#ad5361}.ptabs .white{color:#ddd}
.pmain{width:196px;padding:9px 8px 0}
.pcrumb{display:flex;align-items:center;height:20px;padding:0 2px 0 3px}
.pcrumb b{margin-left:9px}.pcrumb .c9{margin:0 8px 0 6px}.pcrumb .pp{margin-left:auto}
.addmod{height:20px;border:1px solid #3d3d3d;border-radius:4px;background:#282828;margin-top:16px;width:180px;display:flex;align-items:center;justify-content:space-between;padding:0 2px 0 7px}
.mod{margin-top:9px;width:180px;height:137px;border:1px solid #4772b3;border-radius:4px;background:#3b3b3b;padding:3px 7px}
.mhead{height:19px;display:flex;align-items:center}
.mhead>.c10{color:#aaa}
.mhead>.i14{margin-left:5px}
.modes{display:flex;margin:0 5px 0 10px;border-radius:4px;overflow:hidden}
.modes i{width:17px;height:18px;display:flex;align-items:center;justify-content:center;background:#505050}
.modes .blue{background:#4772b3}.modes .dk{background:#242424}.cream{color:#e6dfc8}
.bluecam .lens{stroke:#4772b3}
.grip{margin-left:auto;margin-right:-3px;width:12px;height:5px;background:radial-gradient(circle,#999 .7px,transparent 1px) 0 0/3px 3px}
.modbox{width:164px;margin-top:11px;border-color:#454545}
.modbox .pick{width:32px}
.mod .btn{background:#4a4a4a}
.size{display:flex;align-items:center;margin-top:6px;height:18px}
.size b{width:63px;padding-left:24px}
.size span{width:80px;height:18px;line-height:19px;background:#545454;border-radius:4px;text-align:center;letter-spacing:-.2px}
.size i{width:4px;height:4px;border-radius:2px;background:#ddd;margin-left:9px}
.fold{display:flex;gap:4px;align-items:center;height:25px;padding-left:15px}
.fold:nth-of-type(4){margin-top:9px}
.status{height:10px;background:#191919;overflow:hidden;display:flex;color:#888;padding-left:13px;flex:none;position:relative}
.status span{display:flex;gap:11px;height:22px;align-items:center;white-space:nowrap}
.status svg{width:11px;height:13px}
.s1{width:211px}.s2{width:211px}.s4{margin-left:auto;padding-right:9px;letter-spacing:-.42px}
.taskbar{height:12px;background:linear-gradient(90deg,#26333a,#202c3a);flex:none}
.taskbar svg{width:1306px;height:12px}
```
